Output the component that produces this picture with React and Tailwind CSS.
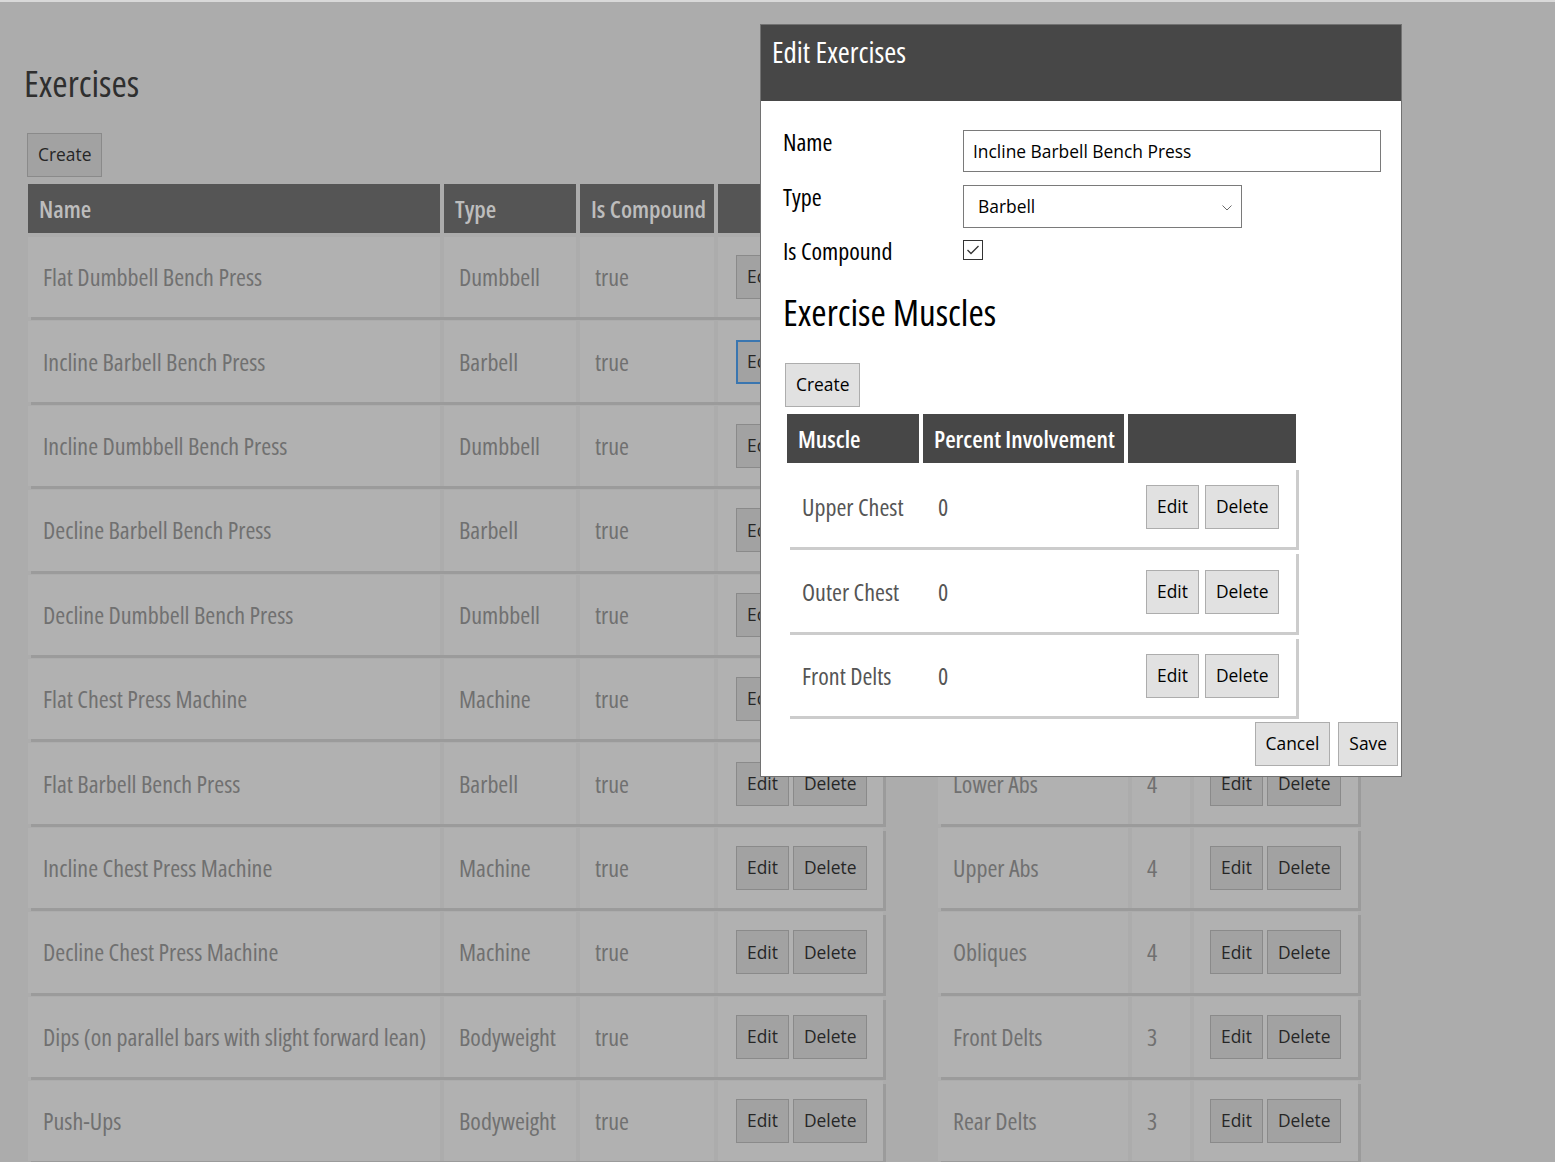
import React from "react";

const COND = "font-['Open_Sans','Noto_Sans',sans-serif] font-stretch-condensed";
const UI = "font-['Open_Sans','Noto_Sans',sans-serif]";

function Btn({ children, modal, focus }) {
  let tone = "bg-[#a2a2a2] border border-[#8a8a8a] text-[#262626] px-[10px]";
  if (modal) tone = "bg-[#e1e1e1] border border-[#adadad] text-black px-[10px]";
  if (focus) tone = "bg-[#a2a2a2] border-2 border-[#3a76b0] text-[#262626] px-[9px]";
  return (
    <button type="button" className={`${UI} ${tone} h-[44px] text-[17.4px] leading-none whitespace-nowrap`}>
      {children}
    </button>
  );
}

const exercises = [
  ["Flat Dumbbell Bench Press", "Dumbbell"],
  ["Incline Barbell Bench Press", "Barbell"],
  ["Incline Dumbbell Bench Press", "Dumbbell"],
  ["Decline Barbell Bench Press", "Barbell"],
  ["Decline Dumbbell Bench Press", "Dumbbell"],
  ["Flat Chest Press Machine", "Machine"],
  ["Flat Barbell Bench Press", "Barbell"],
  ["Incline Chest Press Machine", "Machine"],
  ["Decline Chest Press Machine", "Machine"],
  ["Dips (on parallel bars with slight forward lean)", "Bodyweight"],
  ["Push-Ups", "Bodyweight"],
];

// rows of the second table; the first ones sit fully under the dialog
const muscles = [
  null,
  null,
  null,
  null,
  null,
  null,
  ["Lower Abs", "4"],
  ["Upper Abs", "4"],
  ["Obliques", "4"],
  ["Front Delts", "3"],
  ["Rear Delts", "3"],
];

const mainHead = `${COND} flex items-center bg-[#555555] pl-[11px] text-[24px] font-semibold text-[#bdbdbd] whitespace-nowrap`;
const mainCell = `${COND} flex items-center bg-[#b1b1b1] pl-[15px] text-[24px] text-[#707070] whitespace-nowrap`;

function MainTable() {
  return (
    <div className="flex w-[855px] flex-col gap-1">
      <div className="flex h-[49px] gap-1">
        <div className={`${mainHead} w-[412px]`}>Name</div>
        <div className={`${mainHead} w-[132px]`}>Type</div>
        <div className={`${mainHead} w-[134px]`}>Is Compound</div>
        <div className={`${mainHead} w-[165px]`}></div>
      </div>
      {exercises.map(([name, type], i) => (
        <div key={name} className="flex h-[80.4px] gap-1 shadow-[3px_3px_0_#9b9b9b]">
          <div className={`${mainCell} w-[412px]`}>{name}</div>
          <div className={`${mainCell} w-[132px]`}>{type}</div>
          <div className={`${mainCell} w-[134px]`}>true</div>
          <div className="flex w-[165px] items-center gap-1 bg-[#b1b1b1] pl-[18px]">
            <Btn focus={i === 1}>Edit</Btn>
            <Btn>Delete</Btn>
          </div>
        </div>
      ))}
    </div>
  );
}

function MuscleTable() {
  return (
    <div className="flex w-[420px] flex-col gap-1">
      <div className="flex h-[49px] gap-1">
        <div className={`${mainHead} w-[190px]`}></div>
        <div className={`${mainHead} w-[58px]`}></div>
        <div className={`${mainHead} w-[164px]`}></div>
      </div>
      {muscles.map((row, i) => (
        <div key={i} className="flex h-[80.4px] gap-1 shadow-[3px_3px_0_#9b9b9b]">
          <div className={`${mainCell} w-[190px]`}>{row ? row[0] : ""}</div>
          <div className={`${mainCell} w-[58px] bg-[#afafaf]`}>{row ? row[1] : ""}</div>
          <div className="flex w-[164px] items-center gap-1 bg-[#b1b1b1] pl-[16px]">
            {row && (
              <>
                <Btn>Edit</Btn>
                <Btn>Delete</Btn>
              </>
            )}
          </div>
        </div>
      ))}
    </div>
  );
}

const modalHead = `${COND} flex items-center bg-[#474747] pl-[11px] text-[24px] font-semibold text-white whitespace-nowrap`;
const modalCell = `${COND} flex items-center bg-white pl-[15px] text-[24px] text-[#555555] whitespace-nowrap`;
const label = `${COND} w-[180px] text-[24px] leading-[24px] text-black`;

function Modal() {
  const rows = [
    ["Upper Chest", "0"],
    ["Outer Chest", "0"],
    ["Front Delts", "0"],
  ];
  return (
    <div className="absolute left-[760px] top-[24px] flex h-[753px] w-[642px] flex-col border border-[#727272] bg-white">
      <div className="h-[76px] bg-[#474747] px-[11px] pt-[9px]">
        <h2 className={`${COND} text-[29px] leading-[36px] text-white`}>Edit Exercises</h2>
      </div>
      <div className="pl-[22px] pt-[29px]">
        <div className="flex items-start">
          <label className={label}>Name</label>
          <div className={`${UI} flex h-[42px] w-[418px] items-center border border-[#7a7a7a] pl-[9px] text-[17.4px] text-black`}>
            Incline Barbell Bench Press
          </div>
        </div>
        <div className="mt-[13px] flex items-start">
          <label className={label}>Type</label>
          <div className={`${UI} flex h-[43px] w-[279px] items-center justify-between border border-[#7a7a7a] pl-[14px] pr-[9px] text-[17.4px] text-black`}>
            <span>Barbell</span>
            <svg width="10" height="6" viewBox="0 0 10 6" className="mt-[2px]">
              <polyline points="0.5,0.5 5,5 9.5,0.5" fill="none" stroke="#6b6b6b" strokeWidth="1" />
            </svg>
          </div>
        </div>
        <div className="mt-[12px] flex h-[26px] items-start">
          <label className={`${label} -mt-[1px]`}>Is Compound</label>
          <div className="flex h-[20px] w-[20px] items-center justify-center border border-[#333333] bg-white">
            <svg width="14" height="12" viewBox="0 0 14 12">
              <polyline points="1.5,6 5,9.5 12.5,2" fill="none" stroke="#333333" strokeWidth="1.3" />
            </svg>
          </div>
        </div>
        <h2 className={`${COND} mt-[24px] text-[37px] leading-[44px] text-black`}>Exercise Muscles</h2>
        <div className="ml-[2px] mt-[29px]">
          <Btn modal>Create</Btn>
        </div>
        <div className="ml-[4px] mt-[7px] flex w-[509px] flex-col gap-1">
          <div className="flex h-[49px] gap-1">
            <div className={`${modalHead} w-[132px]`}>Muscle</div>
            <div className={`${modalHead} w-[201px]`}>Percent Involvement</div>
            <div className={`${modalHead} w-[168px]`}></div>
          </div>
          {rows.map(([m, p]) => (
            <div key={m} className="flex h-[80.4px] gap-1 shadow-[3px_3px_0_#cccccc]">
              <div className={`${modalCell} w-[132px]`}>{m}</div>
              <div className={`${modalCell} w-[201px]`}>{p}</div>
              <div className="flex w-[168px] items-center gap-[6px] bg-white pl-[18px]">
                <Btn modal>Edit</Btn>
                <Btn modal>Delete</Btn>
              </div>
            </div>
          ))}
        </div>
      </div>
      <div className="mt-[6px] flex justify-end gap-[8px] pr-[3px]">
        <Btn modal>Cancel</Btn>
        <Btn modal>Save</Btn>
      </div>
    </div>
  );
}

export default function App() {
  return (
    <div className="relative h-[1162px] w-[1555px] overflow-hidden bg-[#acacac]">
      <div className="h-[2px] bg-[#d9d9d9]" />
      <h1 className={`${COND} ml-[24px] mt-[59px] text-[37px] leading-[44px] text-[#2f2f2f]`}>Exercises</h1>
      <div className="ml-[27px] mt-[28px]">
        <Btn>Create</Btn>
      </div>
      <div className="ml-[28px] mt-[7px] flex items-start gap-[55px]">
        <MainTable />
        <MuscleTable />
      </div>
      <Modal />
    </div>
  );
}
